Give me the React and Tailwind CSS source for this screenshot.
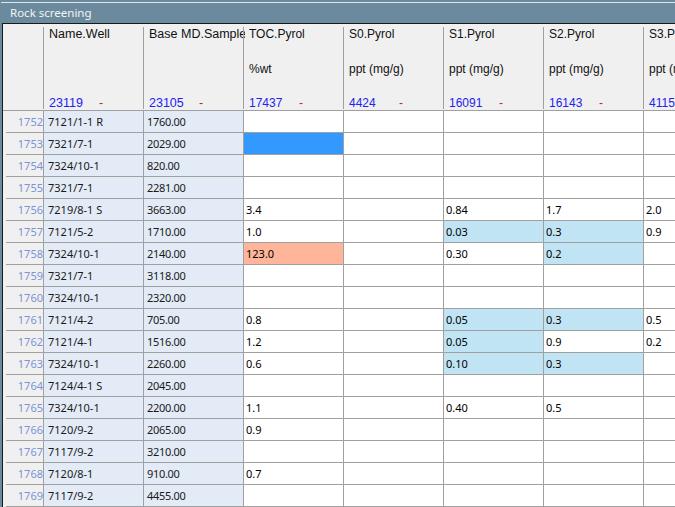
const cols = [
  { name: "Name.Well", unit: "", count: "23119", size: "text-[12.5px]" },
  { name: "Base MD.Sample", unit: "", count: "23105", size: "text-[12.5px]" },
  { name: "TOC.Pyrol", unit: "%wt", count: "17437", size: "text-[12px]" },
  { name: "S0.Pyrol", unit: "ppt (mg/g)", count: "4424", size: "text-[12px]" },
  { name: "S1.Pyrol", unit: "ppt (mg/g)", count: "16091", size: "text-[12px]" },
  { name: "S2.Pyrol", unit: "ppt (mg/g)", count: "16143", size: "text-[12px]" },
  { name: "S3.Pyrol", unit: "ppt (mg/g)", count: "4115", size: "text-[12px]" },
];
const B = "bg-[#c1e4f4]";
const rows = [
  [1752, "7121/1-1 R", "1760.00"],
  [1753, "7321/7-1", "2029.00", [["", "bg-[#3399ff]"]]],
  [1754, "7324/10-1", "820.00"],
  [1755, "7321/7-1", "2281.00"],
  [1756, "7219/8-1 S", "3663.00", [["3.4"], [""], ["0.84"], ["1.7"], ["2.0"]]],
  [1757, "7121/5-2", "1710.00", [["1.0"], [""], ["0.03", B], ["0.3", B], ["0.9"]]],
  [1758, "7324/10-1", "2140.00", [["123.0", "bg-[#ffb599]"], [""], ["0.30"], ["0.2", B], [""]]],
  [1759, "7321/7-1", "3118.00"],
  [1760, "7324/10-1", "2320.00"],
  [1761, "7121/4-2", "705.00", [["0.8"], [""], ["0.05", B], ["0.3", B], ["0.5"]]],
  [1762, "7121/4-1", "1516.00", [["1.2"], [""], ["0.05", B], ["0.9"], ["0.2"]]],
  [1763, "7324/10-1", "2260.00", [["0.6"], [""], ["0.10", B], ["0.3", B], [""]]],
  [1764, "7124/4-1 S", "2045.00"],
  [1765, "7324/10-1", "2200.00", [["1.1"], [""], ["0.40"], ["0.5"], [""]]],
  [1766, "7120/9-2", "2065.00", [["0.9"]]],
  [1767, "7117/9-2", "3210.00"],
  [1768, "7120/8-1", "910.00", [["0.7"]]],
  [1769, "7117/9-2", "4455.00"],
];

function Row({ r }) {
  const vals = r[3] || [];
  return (
    <div className="flex h-[22px] shrink-0">
      <div className="w-[37px] shrink-0 h-full flex items-center justify-end bg-[#f0f0f0] border-b border-[#a0a0a0] ml-[3px] text-[#7b93d8]">
        {r[0]}
      </div>
      <div className="w-[100px] shrink-0 h-full flex items-center pl-[4px] bg-[#e3ebf6] border-l border-b border-[#a0a0a0] text-[#1a1a1a]">
        {r[1]}
      </div>
      <div className="w-[100px] shrink-0 h-full flex items-center pl-[3px] tracking-[-0.3px] bg-[#e3ebf6] border-l border-b border-[#a0a0a0] text-[#1a1a1a]">
        {r[2]}
      </div>
      {[0, 1, 2, 3, 4].map((i) => {
        const v = vals[i] || [""];
        return (
          <div
            key={i}
            className={`w-[100px] shrink-0 h-full flex items-center pl-[2px] border-l border-b border-[#a0a0a0] text-black ${v[1] || "bg-white"}`}
          >
            {v[0]}
          </div>
        );
      })}
    </div>
  );
}

export default function App() {
  return (
    <div className="w-[675px] h-[507px] overflow-hidden flex flex-col bg-[#6c8a9d] font-['Noto_Sans',sans-serif] text-[11px] leading-none">
      <div className="h-[2px] shrink-0" />
      <div className="h-px shrink-0 bg-[#dfe6ea] ml-[1px]" />
      <div className="h-[20px] shrink-0 flex items-center pl-[10px] text-[11.5px] text-[#f2f5f7]">Rock screening</div>
      <div className="flex-1 min-h-0 ml-[2px] border-l border-t border-[#1a1a1a] bg-[#f0f0f0] overflow-hidden flex flex-col">
        <div className="h-[87px] shrink-0 flex bg-[#f0f0f0] border-b border-[#a0a0a0] font-['Liberation_Sans',sans-serif]">
          <div className="w-[40px] shrink-0" />
          {cols.map((c) => (
            <div key={c.name} className={`w-[100px] shrink-0 mt-[3px] mb-[1px] border-l border-[#a0a0a0] pl-[5px] flex flex-col whitespace-nowrap ${c.size}`}>
              <div className="h-[13px] mt-[1px] w-[96px] overflow-hidden text-[#111]">{c.name}</div>
              <div className="h-[13px] mt-[22px] text-[#111]">{c.unit}</div>
              <div className="mt-auto flex text-[#2222ee]">
                <span className="w-[50px]">{c.count}</span>
                <span className="text-[#a03030]">-</span>
              </div>
            </div>
          ))}
        </div>
        {rows.map((r) => (
          <Row key={r[0]} r={r} />
        ))}
      </div>
    </div>
  );
}
